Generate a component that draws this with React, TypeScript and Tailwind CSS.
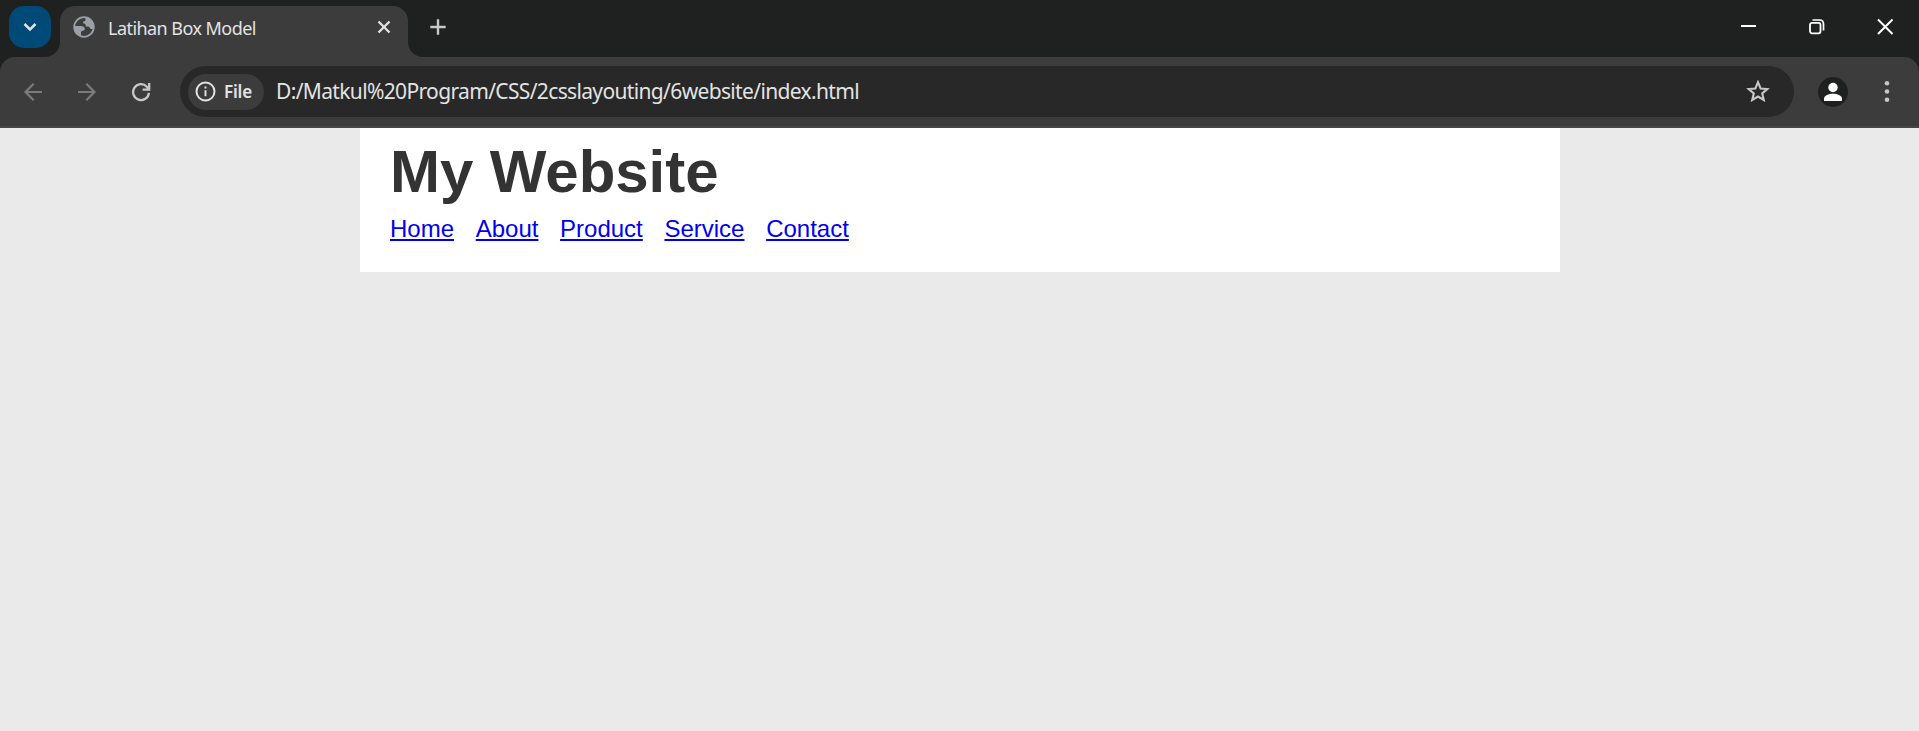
import React from 'react';

const links = ['Home', 'About', 'Product', 'Service', 'Contact'];

function Globe() {
  return (
    <svg width="22" height="22" viewBox="0 0 22 22" fill="none">
      <circle cx="11" cy="11" r="9.8" stroke="#9aa0a6" strokeWidth="1.8" />
      <path d="M12.500 1V3.500C12.500 5.500 10 5 10 6.500C10 8 12.700 7 12.700 9.500V10.500H15.500C16.700 10.500 16.500 13 18 13H21C22 7 18 1 12.500 1Z" fill="#9aa0a6" />
      <path d="M1 10H7.500C10.500 10 11.800 11 11.800 13C11.800 15.500 8 14 8 16.500V20.500C4 19.500 .5 16 1 10Z" fill="#9aa0a6" />
    </svg>
  );
}

function TabStrip() {
  return (
    <div className="flex h-[57px] items-start bg-[#1f2120] pt-1.5">
      <button className="ml-[9px] flex h-[42px] w-[42px] shrink-0 items-center justify-center rounded-[15px] bg-[#004a77]">
        <svg width="14" height="10" viewBox="0 0 14 10" fill="none"><path d="M1.500 2L7 7.500L12.500 2" stroke="#e3e3e3" strokeWidth="2.500" /></svg>
      </button>
      <svg className="-ml-[6px] mt-[36px] shrink-0" width="15" height="15" viewBox="0 0 15 15"><path d="M15 0V15H0C8.300 15 15 8.300 15 0Z" fill="#3c3c3c" /></svg>
      <div className="flex h-[51px] w-[348px] shrink-0 items-start rounded-t-[15px] bg-[#3c3c3c] pl-[13px] pt-[10px]">
        <Globe />
        <span className="ml-[13px] whitespace-nowrap font-['Noto_Sans',sans-serif] text-[18px] leading-6 tracking-[-0.550px] text-[#e3e3e3]">Latihan Box Model</span>
        <svg className="ml-auto mr-[17px] mt-[4px]" width="14" height="14" viewBox="0 0 14 14" fill="none"><path d="M1.500 1.500L12.500 12.500M12.500 1.500L1.500 12.500" stroke="#e3e3e3" strokeWidth="2.300" /></svg>
      </div>
      <svg className="mt-[36px] shrink-0" width="15" height="15" viewBox="0 0 15 15"><path d="M0 0V15H15C6.700 15 0 8.300 0 0Z" fill="#3c3c3c" /></svg>
      <svg className="ml-[7px] mt-[13px]" width="16" height="16" viewBox="0 0 16 16" fill="none"><path d="M8 .3V15.700M.3 8H15.700" stroke="#c7c7c7" strokeWidth="2.400" /></svg>
      <div className="ml-auto mt-[12px] flex items-center pr-[26px]">
        <svg width="16" height="18" viewBox="0 0 16 18" fill="none"><path d="M1 8H16" stroke="#fff" strokeWidth="2" /></svg>
        <svg className="ml-[52px]" width="17" height="18" viewBox="0 0 17 18" fill="none"><rect x="2" y="4.800" width="10.500" height="10.500" rx="2" stroke="#fff" strokeWidth="1.800" /><path d="M4.500 2H11.500Q15.500 2 15.500 6V12.500" stroke="#fff" strokeWidth="1.700" /></svg>
        <svg className="ml-[52px]" width="16" height="18" viewBox="0 0 16 18" fill="none"><path d="M1 1.500L15.500 16M15.500 1.500L1 16" stroke="#fff" strokeWidth="2" /></svg>
      </div>
    </div>
  );
}

function Toolbar() {
  return (
    <div className="bg-[#1f2120]">
      <div className="flex h-[71px] items-start rounded-t-[15px] border-b-2 border-[#474546] bg-[#3c3c3c] pt-[9px]">
        <div className="flex h-[51px] w-[180px] shrink-0 items-center pl-[24px]">
          <svg width="18" height="18" viewBox="0 0 18 18" fill="none" stroke="#7b7b7b" strokeWidth="2.200"><path d="M18 9H1.500M9.700 .8L1.500 9L9.700 17.200" /></svg>
          <svg className="ml-[36px]" width="18" height="18" viewBox="0 0 18 18" fill="none" stroke="#7b7b7b" strokeWidth="2.200"><path d="M0 9H16.500M8.300 .8L16.500 9L8.300 17.200" /></svg>
          <svg className="ml-[36px]" width="19" height="20" viewBox="0 0 19 20" fill="none" stroke="#c7c7c7" strokeWidth="2.300"><path d="M16.900 10.800A7.900 7.900 0 1 1 14.800 4.700L17 7M17.200 1V7.600H10.600" /></svg>
        </div>
        <div className="flex h-[51px] w-[1614px] shrink-0 items-center rounded-full bg-[#282828] pl-2">
          <div className="flex h-[36px] w-[76px] items-center rounded-full bg-[#3c3c3c] pl-[7px]">
            <svg width="21" height="21" viewBox="0 0 21 21" fill="none"><circle cx="10.500" cy="10.500" r="9" stroke="#e3e3e3" strokeWidth="2" /><path d="M10.500 9.300V15.300M10.500 5.500V7.500" stroke="#e3e3e3" strokeWidth="1.900" /></svg>
            <span className="ml-2 font-['Noto_Sans',sans-serif] text-[17px] font-semibold leading-6 tracking-[-0.2px] text-[#e3e3e3]">File</span>
          </div>
          <span className="-mt-[2px] ml-[12px] whitespace-nowrap font-['Noto_Sans',sans-serif] text-[21px] leading-7 tracking-[-0.650px] text-[#e3e3e3]">D:/Matkul%20Program/CSS/2csslayouting/6website/index.html</span>
          <svg className="-mt-[2px] ml-auto mr-[24px]" width="24" height="22" viewBox="0 0 24 22" fill="none"><path d="M12 2.200L14.600 8.500L21.300 9L16.200 13.400L17.800 20L12 16.500L6.200 20L7.800 13.400L2.700 9L9.400 8.500Z" stroke="#c7c7c7" strokeWidth="2.100" /></svg>
        </div>
        <svg className="ml-[24px] mt-[11px]" width="30" height="30" viewBox="0 0 30 30"><circle cx="15" cy="15" r="15" fill="#1f2120" /><circle cx="15" cy="10.500" r="4.700" fill="#fff" /><path d="M6 24V21.500C6 18.500 11 16.800 15 16.800S24 18.500 24 21.500V24Z" fill="#fff" /></svg>
        <svg className="ml-[36px] mt-[15px]" width="6" height="22" viewBox="0 0 6 22" fill="#c7c7c7"><circle cx="3" cy="2.300" r="2.300" /><circle cx="3" cy="10.500" r="2.300" /><circle cx="3" cy="18.700" r="2.300" /></svg>
      </div>
    </div>
  );
}

export default function App() {
  return (
    <div className="flex h-[731px] w-[1919px] flex-col overflow-hidden bg-[#eaeaea]">
      <TabStrip />
      <Toolbar />
      <main className="ml-[360px] h-[144px] w-[1200px] bg-white px-[30px] pt-[11px] font-['Liberation_Sans',sans-serif]">
        <h1 className="text-[60px] font-bold leading-[66px] tracking-[-0.050px] text-[#333]">My Website</h1>
        <nav className="mt-[10px] flex gap-[21.670px] text-2xl leading-[28px] text-[#0000ee]">
          {links.map((label) => <a key={label} href="#" className="underline decoration-2 underline-offset-[2px] [text-decoration-skip-ink:none]">{label}</a>)}
        </nav>
      </main>
    </div>
  );
}
